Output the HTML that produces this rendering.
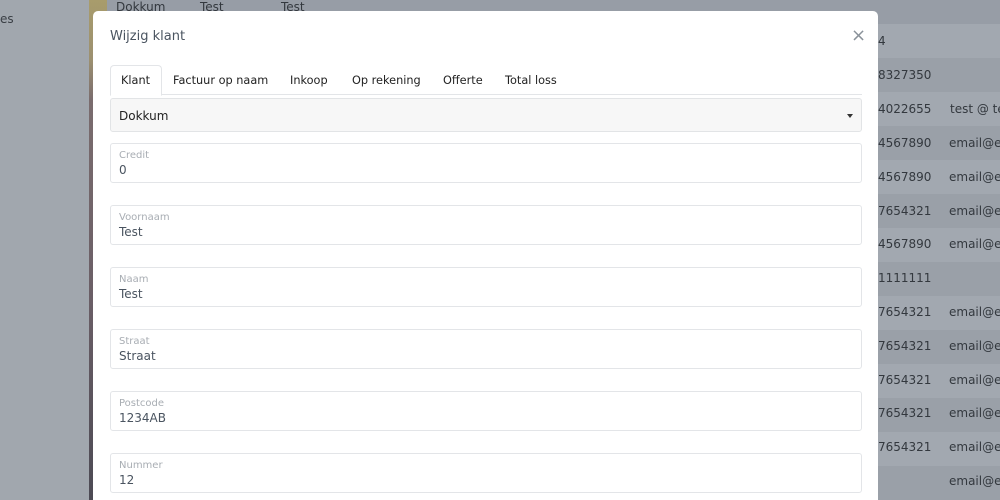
<!DOCTYPE html>
<html style="overflow:hidden;width:1000px;height:500px"><head><meta charset="utf-8"><style>
*{box-sizing:border-box;margin:0;padding:0}
body{width:1000px;height:500px;overflow:hidden;background:#9ea4ac;font-family:"DejaVu Sans","Liberation Sans",sans-serif;position:relative}
.side{position:absolute;left:0;top:0;width:89px;height:500px;background:#a1a7ae}
.side span{position:absolute;left:0;top:12px;font-size:12px;color:#3a3f45}
.strip{position:absolute;left:89px;top:0;width:18px;height:500px;background:linear-gradient(#a89c6c 0,#9c9070 60px,#7a6c6e 100px,#6a5e66 300px,#4c4a54 500px)}
.row{position:absolute;left:107px;width:893px;height:34px}
.bg{position:absolute;font-size:12px;color:#33383e;white-space:nowrap}
.modal{position:absolute;left:93px;top:11px;width:785px;height:489px;background:#fff;border-radius:5px 5px 0 0}
.title{position:absolute;left:17px;top:18px;font-size:13px;color:#4a5460}
.close{position:absolute;left:758px;top:14px;font-size:18px;color:#8a929a}
.tabs{position:absolute;left:17px;top:54px;width:752px;height:30px;border-bottom:1px solid #e3e5e8}
.tab{position:absolute;top:9px;font-size:11.3px;color:#222;white-space:nowrap}
.act{position:absolute;left:0;top:0;width:52px;height:31px;border:1px solid #e3e5e8;border-bottom:1px solid #fff;border-radius:4px 4px 0 0;background:#fff}
.sel{position:absolute;left:17px;top:87px;width:752px;height:34px;background:#f7f7f7;border:1px solid #e2e4e6;border-radius:3px;font-size:12px;color:#222;padding:10px 8px}
.caret{position:absolute;right:8px;top:15px;border-left:3px solid transparent;border-right:3px solid transparent;border-top:4px solid #333}
.f{position:absolute;left:17px;width:752px;height:40px;border:1px solid #e3e5e8;border-radius:3px}
.f .l{position:absolute;left:8px;top:6px;font-size:10px;color:#a8adb3}
.f .v{position:absolute;left:8px;top:19px;font-size:12px;color:#4a5460}
</style></head><body>
<div class="side"><span>es</span></div>
<div class="strip"></div>
<div class="row" style="top:0;height:24px;background:#979da6"></div>
<div class="row" style="top:24px;background:#a2a8b0"></div>
<div class="row" style="top:58px;background:#9aa0a8"></div>
<div class="row" style="top:92px;background:#a2a8b0"></div>
<div class="row" style="top:126px;background:#9aa0a8"></div>
<div class="row" style="top:160px;background:#a2a8b0"></div>
<div class="row" style="top:194px;background:#9aa0a8"></div>
<div class="row" style="top:228px;background:#a2a8b0"></div>
<div class="row" style="top:262px;background:#9aa0a8"></div>
<div class="row" style="top:296px;background:#a2a8b0"></div>
<div class="row" style="top:330px;background:#9aa0a8"></div>
<div class="row" style="top:364px;background:#a2a8b0"></div>
<div class="row" style="top:398px;background:#9aa0a8"></div>
<div class="row" style="top:432px;background:#a2a8b0"></div>
<div class="row" style="top:466px;background:#9aa0a8"></div>
<div class="bg" style="left:116px;top:0">Dokkum</div>
<div class="bg" style="left:200px;top:0">Test</div>
<div class="bg" style="left:281px;top:0">Test</div>
<div class="bg" style="left:878px;top:34px">4</div>
<div class="bg" style="left:878px;top:68px">8327350</div>
<div class="bg" style="left:878px;top:102px">4022655</div><div class="bg" style="left:950px;top:102px">test @ test</div>
<div class="bg" style="left:878px;top:136px">4567890</div><div class="bg" style="left:949px;top:136px">email@email</div>
<div class="bg" style="left:878px;top:170px">4567890</div><div class="bg" style="left:949px;top:170px">email@email</div>
<div class="bg" style="left:878px;top:204px">7654321</div><div class="bg" style="left:949px;top:204px">email@email</div>
<div class="bg" style="left:878px;top:237px">4567890</div><div class="bg" style="left:949px;top:237px">email@email</div>
<div class="bg" style="left:878px;top:271px">1111111</div>
<div class="bg" style="left:878px;top:305px">7654321</div><div class="bg" style="left:949px;top:305px">email@email</div>
<div class="bg" style="left:878px;top:339px">7654321</div><div class="bg" style="left:949px;top:339px">email@email</div>
<div class="bg" style="left:878px;top:373px">7654321</div><div class="bg" style="left:949px;top:373px">email@email</div>
<div class="bg" style="left:878px;top:406px">7654321</div><div class="bg" style="left:949px;top:406px">email@email</div>
<div class="bg" style="left:878px;top:440px">7654321</div><div class="bg" style="left:949px;top:440px">email@email</div>
<div class="bg" style="left:949px;top:474px">email@email</div>
<div class="modal">
<div class="title">Wijzig klant</div>
<div class="close">×</div>
<div class="tabs">
<div class="act"></div>
<div class="tab" style="left:11px">Klant</div>
<div class="tab" style="left:63px">Factuur op naam</div>
<div class="tab" style="left:180px">Inkoop</div>
<div class="tab" style="left:242px">Op rekening</div>
<div class="tab" style="left:333px">Offerte</div>
<div class="tab" style="left:395px">Total loss</div>
</div>
<div class="sel">Dokkum<div class="caret"></div></div>
<div class="f" style="top:132px"><div class="l">Credit</div><div class="v">0</div></div>
<div class="f" style="top:194px"><div class="l">Voornaam</div><div class="v">Test</div></div>
<div class="f" style="top:256px"><div class="l">Naam</div><div class="v">Test</div></div>
<div class="f" style="top:318px"><div class="l">Straat</div><div class="v">Straat</div></div>
<div class="f" style="top:380px"><div class="l">Postcode</div><div class="v">1234AB</div></div>
<div class="f" style="top:442px"><div class="l">Nummer</div><div class="v">12</div></div>
</div>
</body></html>
